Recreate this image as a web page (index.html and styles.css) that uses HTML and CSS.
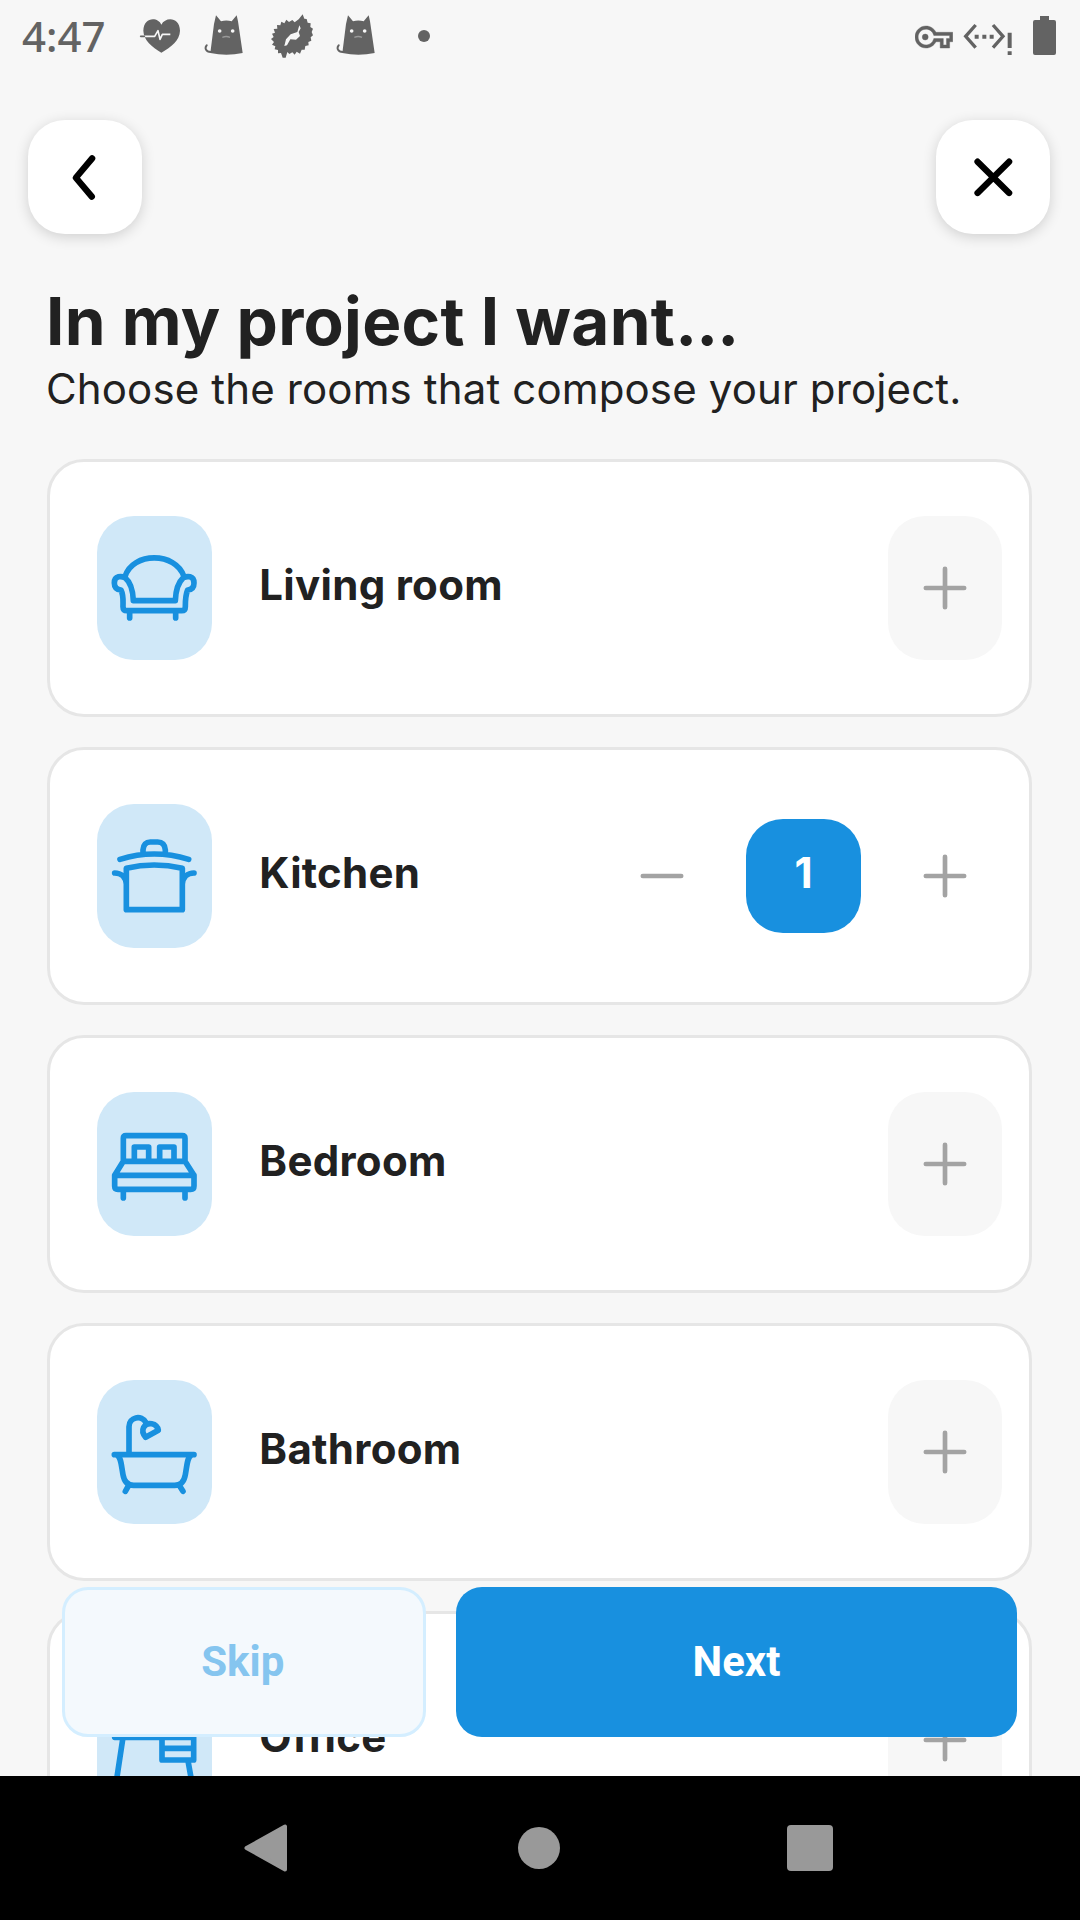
FILE: index.html
```html
<!DOCTYPE html>
<html lang="en">
<head>
<meta charset="utf-8">
<title>In my project I want...</title>
<link rel="stylesheet" href="styles.css">
</head>
<body>
<svg class="defs" aria-hidden="true">
  <symbol id="cat" viewBox="0 0 132 132">
    <path fill="currentColor" d="M36 4 51 22Q67 17 83 22L98 4 102 22 116 117Q67 128 19 117L30 30Z"/>
    <path fill="none" stroke="currentColor" stroke-width="6" stroke-linecap="round" d="M22 114C4 115 2 101 8 94"/>
    <circle cx="47" cy="51" r="5.5" fill="#f7f7f7"/><circle cx="86" cy="51" r="5.5" fill="#f7f7f7"/>
    <path fill="none" stroke="#999" stroke-width="4" d="M55 70Q67 65 78 70"/>
  </symbol>
  <symbol id="plus" viewBox="0 0 132 132">
    <path fill="none" stroke="#a3a3a3" stroke-width="14" stroke-linecap="round" d="M8.500 66H123.500M66 8.500V123.500"/>
  </symbol>
</svg>
<div class="screen">
  <header class="status">
    <span class="time">4:47</span>
    <div class="notices">
      <svg viewBox="0 0 132 132"><path fill="currentColor" d="M70 32C60 8 17 8 16 50 17 80 42 98 70 116 100 98 125 80 126 50 125 8 82 8 70 32Z"/><path fill="none" stroke="#f7f7f7" stroke-width="5" stroke-linejoin="round" d="M16 67H50L60 50 66 76 73 61H97"/><path stroke="currentColor" stroke-width="5" stroke-linecap="round" d="M8 67H19"/></svg>
      <svg><use href="#cat"/></svg>
      <svg viewBox="0 0 132 132"><path fill="currentColor" fill-rule="evenodd" d="M98 1 103 14 110 15 113 26 122 28 121 39 129 44 125 54 129 64 122 70 124 80 115 84 116 94 106 96 104 107 95 107 90 119 80 113 74 122 67 115 58 120 52 114 47 131 38 131 33 117 24 118 24 108 14 106 16 97 6 92 12 84 3 75 11 69 6 59 15 56 11 45 22 44 21 33 31 34 34 23 43 28 49 17 57 24 67 18 74 25 86 16ZM88 34 82 54 62 61 48 76 43 96 51 94 61 76 78 77 90 66 86 54 92 43Z"/></svg>
      <svg><use href="#cat"/></svg>
      <svg viewBox="0 0 132 132"><circle cx="66" cy="66" r="18" fill="currentColor"/></svg>
    </div>
    <div class="system">
      <svg class="key" viewBox="104 42 114 132"><g fill="currentColor" stroke="currentColor" stroke-width=".25" transform="translate(104 54.400) scale(4.720)"><path d="M22 19h-6v-4h-2.680c-1.140 2.420-3.600 4-6.320 4-3.860 0-7-3.140-7-7s3.140-7 7-7c2.720 0 5.170 1.580 6.320 4H24v6h-2v4zm-4-2h2v-4h2v-2H11.940l-.230-.670C11.010 8.340 9.110 7 7 7c-2.760 0-5 2.240-5 5s2.240 5 5 5c2.110 0 4.010-1.340 4.710-3.330l.230-.670H18v4z"/><circle cx="6.500" cy="12" r="1.900"/></g></svg>
      <svg class="net" viewBox="250 42 147 132"><path fill="none" stroke="currentColor" stroke-width="10" d="M288 75 258 109 288 143M340 75 370 109 340 143"/><path fill="currentColor" d="M285 104h12v12h-12zM308 104h12v12h-12zM330 104h12v12h-12zM384 98h12v46h-12zM384 154h12v11h-12z"/></svg>
      <svg class="battery" viewBox="459 42 69 132"><path fill="currentColor" d="M480 48h27v12h15q6 0 6 6v93q0 6-6 6h-57q-6 0-6-6v-93q0-6 6-6h15z"/></svg>
    </div>
  </header>

  <main class="content">
    <nav class="toolbar">
      <button class="tool" aria-label="Back"><svg viewBox="84 360 343 342"><path d="M277 475 228 533 276 590"/></svg></button>
      <button class="tool" aria-label="Close"><svg viewBox="168 360 343 342"><path d="M293 485 388 579M388 485 293 579"/></svg></button>
    </nav>
    <h1>In my project I want<span class="dots">...</span></h1>
    <p class="lead">Choose the rooms that compose your project.</p>

    <ul class="rooms">
      <li class="room">
        <svg class="tile" viewBox="0 0 343 432"><path d="M84 182C106 107 237 107 261 182M84 185C74 180 52 178 52 201 52 214 60 221 72 222 80 238 78 250 78 272Q78 284 90 284H254Q265 284 265 272C265 250 265 238 272 222 284 221 291 214 291 201 291 178 270 180 259 185M84 185C102 200 108 225 109 254H235C236 225 243 200 259 185M98 288V306M236 288V306"/></svg>
        <span class="name">Living room</span>
        <button class="step filled"><svg><use href="#plus"/></svg></button>
      </li>
      <li class="room">
        <svg class="tile" viewBox="0 0 343 432"><path d="M69 166Q171 134 275 166M138 146V138Q140 114 160 114H182Q203 114 205 138V146M88 193Q171 173 256 193V317H88ZM53 207C72 207 86 220 88 240M291 207C272 207 258 220 256 240"/></svg>
        <span class="name">Kitchen</span>
        <button class="step"><svg viewBox="0 0 132 132"><path fill="none" stroke="#a3a3a3" stroke-width="14" stroke-linecap="round" d="M8.500 66H123.500"/></svg></button>
        <span class="count">1</span>
        <button class="step"><svg><use href="#plus"/></svg></button>
      </li>
      <li class="room">
        <svg class="tile" viewBox="0 0 343 432"><path d="M79 208V139Q79 131 87 131H256Q264 131 264 139V208M112 206V165H155V206M188 206V165H231V206M79 208H264L291 250V282Q291 292 281 292H63Q53 292 53 282V250ZM53 250H291M79 296V318M264 296V318"/></svg>
        <span class="name">Bedroom</span>
        <button class="step filled"><svg><use href="#plus"/></svg></button>
      </li>
      <li class="room">
        <svg class="tile" viewBox="0 0 343 432"><path d="M52 224H291M96 222V140C96 112 133 102 148 129M146 172 184 151C180 128 150 124 140 142 135 152 139 164 146 172ZM60 226C72 232 72 250 78 284 82 306 94 316 110 316H233C249 316 261 306 265 284 271 250 271 232 283 226M94 318 85 334M248 318 258 334"/></svg>
        <span class="name">Bathroom</span>
        <button class="step filled"><svg><use href="#plus"/></svg></button>
      </li>
      <li class="room">
        <svg class="tile" viewBox="0 0 343 432"><path d="M53 208H290V276H195V208M195 241H290M78 208 58 340M273 278 284 340"/></svg>
        <span class="name">Office</span>
        <button class="step filled"><svg><use href="#plus"/></svg></button>
      </li>
    </ul>

    <div class="actions">
      <button class="action skip">Skip</button>
      <button class="action next">Next</button>
    </div>
  </main>

  <footer class="sysnav">
    <svg viewBox="0 0 44 48"><path fill="#999" stroke="#999" stroke-width="4" stroke-linejoin="round" d="M2.500 24 41 2.500V45.500Z"/></svg>
    <svg viewBox="0 0 42 42"><circle cx="21" cy="21" r="21" fill="#999"/></svg>
    <svg viewBox="0 0 46 46"><rect width="46" height="46" rx="4" fill="#999"/></svg>
  </footer>
</div>
</body>
</html>
```
FILE: styles.css
```css
* { box-sizing: border-box; }
body { margin: 0; background: #f7f7f7; }
button { margin: 0; padding: 0; border: 0; background: none; }
.defs { display: none; }

.screen {
  display: flex;
  flex-direction: column;
  width: 1080px;
  height: 1920px;
  overflow: hidden;
  color: #212121;
  font-family: Inter, "Liberation Sans", sans-serif;
  font-optical-sizing: none;
}

.status {
  display: flex;
  align-items: center;
  flex: none;
  height: 72px;
  padding: 0 24px 0 22px;
  color: #636363;
}
.time {
  width: 116px;
  font: 500 42px/50px "Noto Sans", sans-serif;
}
.notices { display: flex; gap: 22px; }
.notices svg { width: 44px; height: 44px; }
.system { display: flex; margin-left: auto; }
.system svg { height: 44px; }
.key { width: 38px; }
.net { width: 49px; margin: 0 20.670px 0 10.670px; }
.battery { width: 23px; }

.content {
  position: relative;
  flex: none;
  height: 1704px;
  padding-top: 48px;
  overflow: hidden;
}
.toolbar {
  display: flex;
  justify-content: space-between;
  padding: 0 30px 0 28px;
}
.tool {
  width: 114.330px;
  height: 114px;
  border-radius: 37px;
  background: #fff;
  box-shadow: 0 3px 14px rgba(0, 0, 0, .16);
}
.tool svg { display: block; width: 114px; height: 114px; }
.tool path {
  fill: none;
  stroke: #000;
  stroke-width: 19;
  stroke-linecap: round;
  stroke-linejoin: round;
}

h1 {
  margin: 47px 46px 0;
  font-size: 65.600px;
  font-weight: 700;
  line-height: 80px;
  letter-spacing: .32px;
}
.dots { letter-spacing: -.9px; }
.lead {
  margin: 0 46px;
  font-size: 42px;
  font-weight: 400;
  line-height: 56px;
  letter-spacing: .140px;
}

.rooms {
  display: flex;
  flex-direction: column;
  gap: 30px;
  margin: 42px 48.500px 0 46.500px;
  padding: 0;
  list-style: none;
}
.room {
  display: flex;
  align-items: center;
  flex: none;
  height: 258px;
  padding: 0 26.500px 0 47.700px;
  border: 3px solid #e6e6e6;
  border-radius: 37px;
  background: #fff;
}
.tile {
  flex: none;
  width: 114.330px;
  height: 144px;
  border-radius: 37px;
  background: #d0e8f8;
}
.tile path {
  fill: none;
  stroke: #1890df;
  stroke-width: 17;
  stroke-linecap: round;
  stroke-linejoin: round;
}
.name {
  flex: 1;
  padding: 0 0 8px 47.800px;
  font-size: 42px;
  font-weight: 700;
  letter-spacing: .3px;
}
.step {
  display: flex;
  align-items: center;
  justify-content: center;
  width: 114.330px;
  height: 144px;
  border-radius: 37px;
}
.step svg { width: 44px; height: 44px; }
.filled { background: #f7f7f7; }
.count {
  width: 114.330px;
  height: 114px;
  margin: 0 27px;
  border-radius: 37px;
  background: #1890df;
  color: #fff;
  font-size: 42px;
  font-weight: 700;
  line-height: 108px;
  text-align: center;
}

/* Floating action bar above the scrolling list */
.actions {
  position: absolute;
  left: 61.500px;
  right: 63px;
  bottom: 39px;
  display: flex;
  gap: 30px;
}
.action {
  height: 150px;
  padding-bottom: 2px;
  border-radius: 26px;
  font: 700 42px Roboto, sans-serif;
}
.skip {
  width: 364.500px;
  padding-right: 2px;
  border: 3px solid #d4eeff;
  background: #f4f9fd;
  color: #85c5ef;
}
.next { flex: 1; background: #1890df; color: #fff; }

.sysnav {
  display: flex;
  align-items: center;
  height: 144px;
  padding: 0 0 0 244px;
  background: #000;
}
.sysnav svg:nth-child(1) { width: 44px; height: 48px; }
.sysnav svg:nth-child(2) { width: 42px; height: 42px; margin: 0 227px 0 230px; }
.sysnav svg:nth-child(3) { width: 46px; height: 46px; }
```
